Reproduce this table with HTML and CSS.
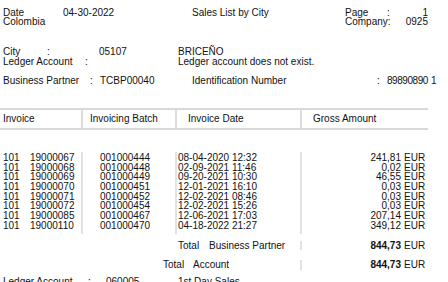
FILE: index.html
```html
<!DOCTYPE html>
<html lang="en">
<head>
<meta charset="utf-8">
<title>Sales List by City</title>
<link rel="stylesheet" href="styles.css">
</head>
<body>
<div class="report">
  <header class="top">
    <span>Date</span><span>04-30-2022</span><span>Sales List by City</span><span>Page</span><span class="pv"><span>:</span><span>1</span></span>
    <span>Colombia</span><span></span><span></span><span>Company:</span><span class="r">0925</span>
  </header>

  <section class="city">
    <span>City</span><span>:</span><span></span><span>05107</span><span>BRICEÑO</span>
    <span class="span2">Ledger Account</span><span>:</span><span></span><span>Ledger account does not exist.</span>
  </section>

  <section class="bp">
    <span class="w87">Business Partner</span><span class="w10">:</span><span class="w92">TCBP00040</span><span class="w185">Identification Number</span><span class="w10">:</span><span class="w44 idn">89890890</span><span>1</span>
  </section>

  <div class="thead">
    <div class="th c1">Invoice</div>
    <div class="th c2">Invoicing Batch</div>
    <div class="th c3">Invoice Date</div>
    <div class="th c4">Gross Amount</div>
  </div>

  <div class="tbody">
    <div class="col c1">
      <div><span class="ser">101</span>19000067</div>
      <div><span class="ser">101</span>19000068</div>
      <div><span class="ser">101</span>19000069</div>
      <div><span class="ser">101</span>19000070</div>
      <div><span class="ser">101</span>19000071</div>
      <div><span class="ser">101</span>19000072</div>
      <div><span class="ser">101</span>19000085</div>
      <div><span class="ser">101</span>19000110</div>
    </div>
    <div class="col c2">
      <div>001000444</div>
      <div>001000448</div>
      <div>001000449</div>
      <div>001000451</div>
      <div>001000452</div>
      <div>001000454</div>
      <div>001000467</div>
      <div>001000470</div>
    </div>
    <div class="col c3">
      <div>08-04-2020 12:32</div>
      <div>02-09-2021 11:46</div>
      <div>09-20-2021 10:30</div>
      <div>12-01-2021 16:10</div>
      <div>12-02-2021 08:46</div>
      <div>12-02-2021 15:26</div>
      <div>12-06-2021 17:03</div>
      <div>04-18-2022 21:27</div>
    </div>
    <div class="col c4">
      <div class="amt"><span class="num">241,81</span><span class="cur">EUR</span></div>
      <div class="amt"><span class="num">0,02</span><span class="cur">EUR</span></div>
      <div class="amt"><span class="num">46,55</span><span class="cur">EUR</span></div>
      <div class="amt"><span class="num">0,03</span><span class="cur">EUR</span></div>
      <div class="amt"><span class="num">0,03</span><span class="cur">EUR</span></div>
      <div class="amt"><span class="num">0,03</span><span class="cur">EUR</span></div>
      <div class="amt"><span class="num">207,14</span><span class="cur">EUR</span></div>
      <div class="amt"><span class="num">349,12</span><span class="cur">EUR</span></div>
    </div>
  </div>

  <div class="total total-bp">
    <div class="label"><span class="tw">Total</span>Business Partner</div>
    <div class="amt sum"><span class="num">844,73</span><span class="cur">EUR</span></div>
  </div>

  <div class="total total-acc">
    <div class="label"><span class="tw">Total</span>Account</div>
    <div class="amt sum"><span class="num">844,73</span><span class="cur">EUR</span></div>
  </div>

  <section class="next">
    <span class="n1">Ledger Account</span><span class="n2">:</span><span class="n3">060005</span><span>1st Day Sales</span>
  </section>
</div>
</body>
</html>
```

FILE: styles.css
```css
html, body {
  margin: 0;
  padding: 0;
  background: #fff;
}

body {
  width: 448px;
  height: 282px;
  overflow: hidden;
  font-family: "Liberation Sans", Arial, sans-serif;
  font-size: 10px;
  color: #111;
}

.report {
  white-space: nowrap;
}

/* page header */
.top {
  display: grid;
  grid-template-columns: 60px 129px 153px 42px 41px;
  padding: 9px 0 0 3px;
  line-height: 8.5px;
}

.pv {
  display: flex;
  justify-content: space-between;
}

.r {
  text-align: right;
}

/* city block */
.city {
  display: grid;
  grid-template-columns: 44px 38px 14px 79px auto;
  margin-top: 21px;
  padding-left: 3px;
  line-height: 9.6px;
}

.span2 {
  grid-column: span 2;
}

/* business partner line */
.bp {
  display: flex;
  margin-top: 9.6px;
  padding-left: 3px;
  line-height: 9.6px;
}

.w87 { width: 87px; }
.w10 { width: 10px; }
.w92 { width: 92px; }
.w185 { width: 185px; }
.w44 { width: 44px; }

.idn {
  letter-spacing: -0.45px;
}

/* table header */
.thead {
  display: grid;
  grid-template-columns: 81px 94px 125px 128px;
  margin-top: 23px;
  border-top: 2px solid #d9d9d9;
  border-bottom: 2px solid #d9d9d9;
  width: 428px;
  line-height: 18px;
}

.th.c1 { padding-left: 3px; }
.th.c2 { border-left: 2px solid #dcdcdc; padding-left: 7px; }
.th.c3 { border-left: 2px solid #dcdcdc; padding-left: 11px; }
.th.c4 { border-left: 2px solid #dcdcdc; padding-left: 11px; }

/* table body */
.tbody {
  display: grid;
  grid-template-columns: 81px 94px 125px 128px;
  margin-top: 21.5px;
  width: 428px;
  line-height: 9.7px;
}

.col {
  padding: 1px 0 3px;
}

.col.c1 { padding-left: 3px; }
.col.c2 { border-left: 2px solid #e2e2e2; padding-left: 17px; }
.col.c3 { border-left: 2px solid #e2e2e2; padding-left: 1px; }
.col.c4 { border-left: 2px solid #e2e2e2; }

.ser {
  display: inline-block;
  width: 27px;
}

.amt {
  display: flex;
  justify-content: flex-end;
}

.num {
  margin-right: 3px;
}

.cur {
  width: 24px;
}

/* totals */
.total {
  display: grid;
  grid-template-columns: 300px 128px;
  width: 428px;
  line-height: 9.6px;
}

.total .sum {
  border-left: 2px solid #e2e2e2;
}

.sum .num {
  font-weight: bold;
}

.total-bp {
  margin-top: 7.3px;
}

.total-bp .label {
  padding-left: 178px;
}

.total-bp .tw {
  display: inline-block;
  width: 31px;
}

.total-acc {
  margin-top: 9.9px;
}

.total-acc .label {
  padding-left: 163px;
}

.total-acc .tw {
  display: inline-block;
  width: 30px;
}

/* next ledger account (cut off at the bottom edge, as in the source) */
.next {
  display: flex;
  margin-top: 7.4px;
  padding-left: 3px;
  line-height: 9.6px;
}

.n1 { width: 85px; }
.n2 { width: 18px; }
.n3 { width: 72px; }
```
